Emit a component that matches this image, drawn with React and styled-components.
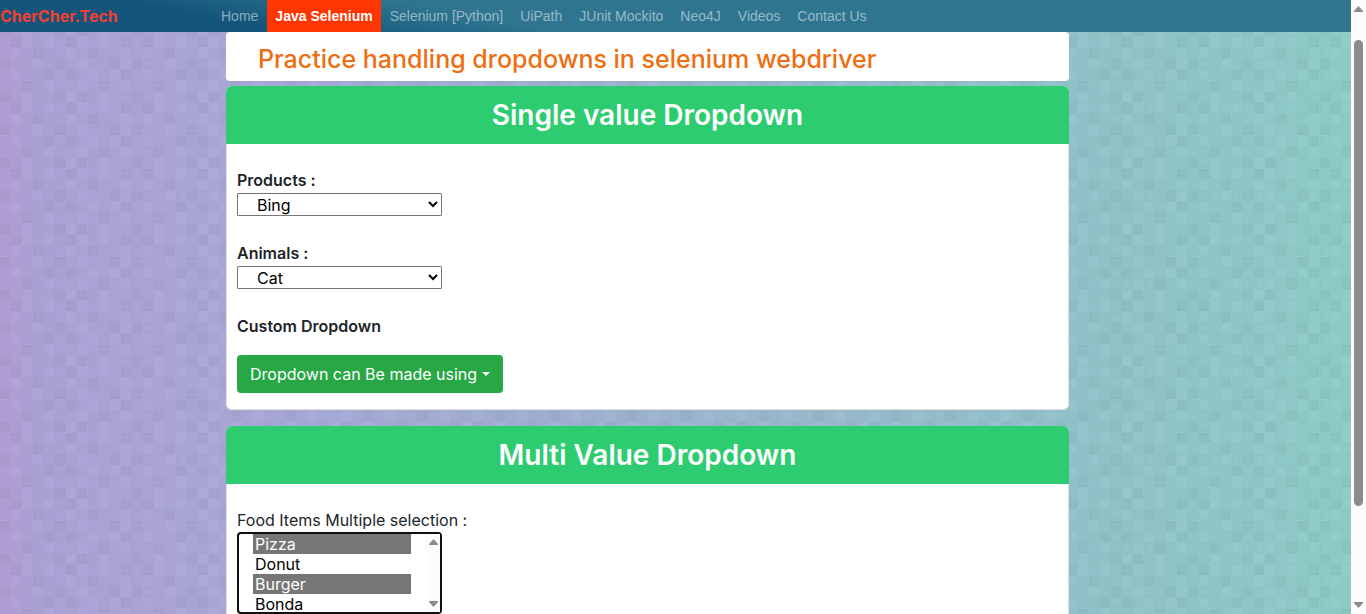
import React from "react";
import styled, { createGlobalStyle, css } from "styled-components";

const darkTiles = [
  [1, 6, 11],
  [3, 8],
  [0, 5, 10],
  [4, 6, 11],
  [2, 9],
  [0, 5, 7],
];
const lightTiles = [
  [2, 4, 7, 9],
  [1, 6, 11],
  [3, 7, 11],
  [1, 8, 10],
  [4, 7, 11],
  [2, 6, 9],
];

const tileSvg = () => {
  let cells = "";
  for (let r = 0; r < 6; r++) {
    for (let c = 0; c < 12; c++) {
      const x = c * 11;
      const y = r * 11;
      const dark = darkTiles[r].includes(c);
      const light = lightTiles[r].includes(c);
      const fill = light ? "#fff" : "#000";
      const alpha = dark ? 0.045 : light ? 0.015 : 0.015;
      cells += `<rect x="${x}" y="${y}" width="10" height="10" fill="${fill}" fill-opacity="${alpha}"/>`;
      cells += `<rect x="${x + 0.5}" y="${y + 0.5}" width="9" height="9" fill="none" stroke="#000" stroke-opacity="0.025"/>`;
    }
  }
  return `<svg xmlns="http://www.w3.org/2000/svg" width="132" height="66">${cells}</svg>`;
};
const tiles = `url("data:image/svg+xml,${encodeURIComponent(tileSvg())}")`;

const GlobalStyle = createGlobalStyle`
  *, *::before, *::after { box-sizing: border-box; }
  body {
    margin: 0;
    overflow: hidden;
    font-family: Inter, "Liberation Sans", sans-serif;
    font-size: 16px;
    line-height: 24px;
    color: #212529;
  }
`;

const Window = styled.div`
  display: flex;
  height: 100vh;
`;

const Page = styled.div`
  flex: 1;
  min-width: 0;
  overflow: hidden;
  background: ${tiles} 0 37px, linear-gradient(to right, #b49fd7 0, #aea3d7 2%, #aba9d8 17%, #a2b1d3 40%, #9abbce 60%, #93c4cb 80%, #8fcdc8 100%);
`;

const Navbar = styled.nav`
  display: flex;
  gap: 1px;
  height: 32px;
  background: linear-gradient(11deg, #12547a 18%, #2f7590 37%);
`;

const Brand = styled.a`
  width: 212px;
  flex: none;
  font-size: 16px;
  font-weight: 700;
  line-height: 32px;
  color: #ef4036;
  text-decoration: none;
`;

const NavLink = styled.a`
  padding: 0 8px;
  font-family: "Liberation Sans", Arial, sans-serif;
  font-size: 14px;
  line-height: 32px;
  white-space: nowrap;
  text-decoration: none;
  color: rgba(255, 255, 255, 0.5);
  ${(p) =>
    p.$active &&
    css`
      background: #ff3502;
      color: #fff;
      font-weight: 700;
    `}
`;

const Content = styled.main`
  margin: 0 282px 0 226px;
`;

const Title = styled.h1`
  margin: 0 0 5px;
  padding: 11px 32px 6px;
  border-radius: 4px;
  background: #fff;
  font-size: 25px;
  line-height: 32px;
  font-weight: 500;
  color: #ee6e12;
`;

const Card = styled.section`
  margin-bottom: 16px;
  border-radius: 6px;
  background: #fff;
  overflow: hidden;
`;

const CardHeader = styled.h2`
  margin: 0;
  background: #2ecc71;
  color: #fff;
  text-align: center;
  font-size: 28px;
  line-height: 58px;
  font-weight: 600;
`;

const CardBody = styled.div`
  padding: 24px 10px 16px;
  border: 1px solid #dfdfdf;
  border-top: 0;
  border-radius: 0 0 6px 6px;
`;

const Field = styled.div`
  display: flex;
  flex-direction: column;
  gap: 1px;
  margin-bottom: 25px;
`;

const Label = styled.label`
  display: block;
  font-weight: ${(p) => (p.$light ? 400 : 600)};
`;

const Heading = styled.h3`
  margin: 0 0 17px;
  font-size: 16px;
  line-height: 24px;
  font-weight: 600;
`;

const Select = styled.select`
  display: block;
  width: 205px;
  height: 23px;
  padding: 0 0 0 15px;
  border: 1px solid #767676;
  border-radius: 1px;
  background: #fff;
  font: inherit;
  color: #000;
`;

const DropButton = styled.button`
  display: flex;
  align-items: center;
  gap: 5px;
  height: 38px;
  padding: 0 13px;
  border: 0;
  border-radius: 4px;
  background: #28a745;
  color: #fff;
  font: inherit;

  &::after {
    content: "";
    border: 4px solid transparent;
    border-top-color: #fff;
    border-bottom: 0;
  }
`;

const ListWrap = styled.div`
  position: relative;
  width: 205px;
`;

const MultiSelect = styled.select`
  display: block;
  width: 100%;
  height: 82px;
  padding: 0 29px 0 14px;
  border: 2px solid #101010;
  border-radius: 4px;
  outline: none;
  background: #fff;
  font: inherit;
  color: #000;
  overflow: hidden;
  scrollbar-width: none;

  option {
    height: 20px;
    min-height: 20px;
    padding: 0 2px;
    line-height: 18px;
  }
  option:checked {
    background: linear-gradient(#767676, #767676);
    color: #fff;
    -webkit-text-fill-color: #fff;
  }
`;

const ListBar = styled.div`
  position: absolute;
  top: 2px;
  right: 2px;
  bottom: 2px;
  width: 14px;
  padding: 5px 0;
  display: flex;
  flex-direction: column;
  justify-content: space-between;
  align-items: center;
  background: #fcfcfc;
`;

const PageBar = styled.div`
  display: flex;
  flex-direction: column;
  align-items: center;
  width: 15px;
  padding: 6px 0;
  background: #fcfcfc;
`;

const Track = styled.div`
  flex: 1;
  width: 9px;
  padding-top: 28px;
`;

const Thumb = styled.div`
  height: 83%;
  border-radius: 5px;
  background: #8b8b8b;
`;

const Arrow = ({ down }) => (
  <svg width="9" height="6" viewBox="0 0 9 6" aria-hidden="true">
    <path d={down ? "M0 0H9V1L4.5 6L0 1Z" : "M0 6H9V5L4.5 0L0 5Z"} fill="#8b8b8b" />
  </svg>
);

const links = ["Home", "Java Selenium", "Selenium [Python]", "UiPath", "JUnit Mockito", "Neo4J", "Videos", "Contact Us"];

export default function App() {
  return (
    <>
      <GlobalStyle />
      <Window>
        <Page>
          <Navbar>
            <Brand href="#">CherCher.Tech</Brand>
            {links.map((l) => (
              <NavLink key={l} href="#" $active={l === "Java Selenium"}>{l}</NavLink>
            ))}
          </Navbar>
          <Content>
            <Title>Practice handling dropdowns in selenium webdriver</Title>
            <Card>
              <CardHeader>Single value Dropdown</CardHeader>
              <CardBody>
                <Field>
                  <Label htmlFor="products">Products :</Label>
                  <Select id="products"><option>Bing</option></Select>
                </Field>
                <Field>
                  <Label htmlFor="animals">Animals :</Label>
                  <Select id="animals"><option>Cat</option></Select>
                </Field>
                <Heading>Custom Dropdown</Heading>
                <DropButton type="button">Dropdown can Be made using</DropButton>
              </CardBody>
            </Card>
            <Card>
              <CardHeader>Multi Value Dropdown</CardHeader>
              <CardBody>
                <Label $light htmlFor="foods">Food Items Multiple selection :</Label>
                <ListWrap>
                  <MultiSelect id="foods" multiple size={4} defaultValue={["Pizza", "Burger"]}>
                    <option>Pizza</option>
                    <option>Donut</option>
                    <option>Burger</option>
                    <option>Bonda</option>
                  </MultiSelect>
                  <ListBar><Arrow /><Arrow down /></ListBar>
                </ListWrap>
              </CardBody>
            </Card>
          </Content>
        </Page>
        <PageBar aria-hidden="true">
          <Arrow />
          <Track><Thumb /></Track>
          <Arrow down />
        </PageBar>
      </Window>
    </>
  );
}
